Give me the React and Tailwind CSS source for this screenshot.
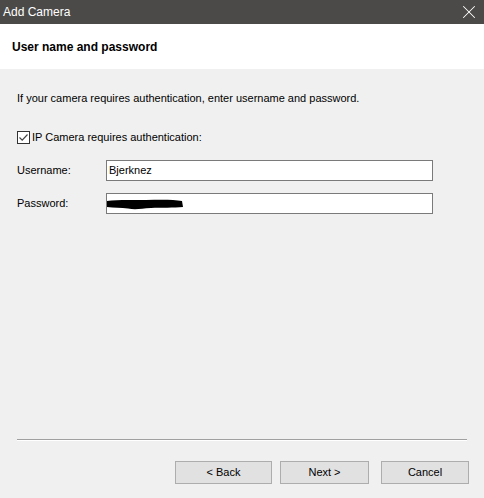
import { X } from "lucide-react";

const font = { fontFamily: '"Segoe UI", "Liberation Sans", Arial, sans-serif' };

const Field = ({ label, children }) => (
  <div className="flex h-[21px] items-center">
    <span className="w-[89px] text-[11px] text-black">{label}</span>
    <div className="flex h-[21px] w-[327px] items-center border border-[#7a7a7a] bg-white px-[2px] text-[11px] text-black">
      {children}
    </div>
  </div>
);

const WizardButton = ({ className, children }) => (
  <button
    type="button"
    className={`flex h-[23px] items-center justify-center border border-[#adadad] bg-[#e1e1e1] text-[11px] text-black ${className}`}
  >
    {children}
  </button>
);

export default function App() {
  return (
    <div className="flex h-[498px] w-[484px] flex-col overflow-hidden bg-[#f0f0f0]" style={font}>
      <div className="flex h-[24px] shrink-0 items-center justify-between bg-[#4b4a48] pl-[3px] pr-[4px]">
        <span className="text-[12px] text-white">Add Camera</span>
        <X className="h-[22px] w-[22px] text-white" strokeWidth={1.1} />
      </div>

      <div className="flex h-[45px] shrink-0 items-center bg-white pl-[12px]">
        <span className="text-[12px] font-bold text-black">User name and password</span>
      </div>

      <div className="flex flex-1 flex-col px-[17px]">
        <p className="mt-[22px] text-[11px] leading-[14px] text-black">
          If your camera requires authentication, enter username and password.
        </p>

        <label className="mt-[24px] flex items-center gap-[2px] text-[11px] text-black">
          <span className="flex h-[13px] w-[13px] items-center justify-center border border-[#333] bg-white">
            <svg viewBox="0 0 11 11" className="h-[11px] w-[11px]">
              <path d="M1.5 5.5 L4.2 8.2 L9.5 2.5" fill="none" stroke="#444" strokeWidth="1.2" />
            </svg>
          </span>
          IP Camera requires authentication:
        </label>

        <div className="mt-[14px] flex flex-col gap-[12px]">
          <Field label="Username:">Bjerknez</Field>
          <Field label="Password:">
            <svg viewBox="0 0 78 12" className="-ml-[3px] mt-[2px] h-[12px] w-[78px]">
              <path
                d="M1 3 C10 1.5 25 2 40 2 C55 1.5 68 1.5 76 3 L77 9 C68 10 55 9.5 45 10 C35 10.5 30 12 22 10.5 C15 9.5 8 10 1 9 Z"
                fill="#000"
              />
            </svg>
          </Field>
        </div>

        <div className="mt-auto mb-[14px] flex flex-col">
          <div className="h-[2px] w-[450px] border-t border-[#a0a0a0] bg-white" />
          <div className="mt-[20px] -mr-[2px] flex justify-end">
            <WizardButton className="w-[97px]">&lt; Back</WizardButton>
            <WizardButton className="ml-[8px] w-[89px]">Next &gt;</WizardButton>
            <WizardButton className="ml-[12px] w-[88px]">Cancel</WizardButton>
          </div>
        </div>
      </div>
    </div>
  );
}
